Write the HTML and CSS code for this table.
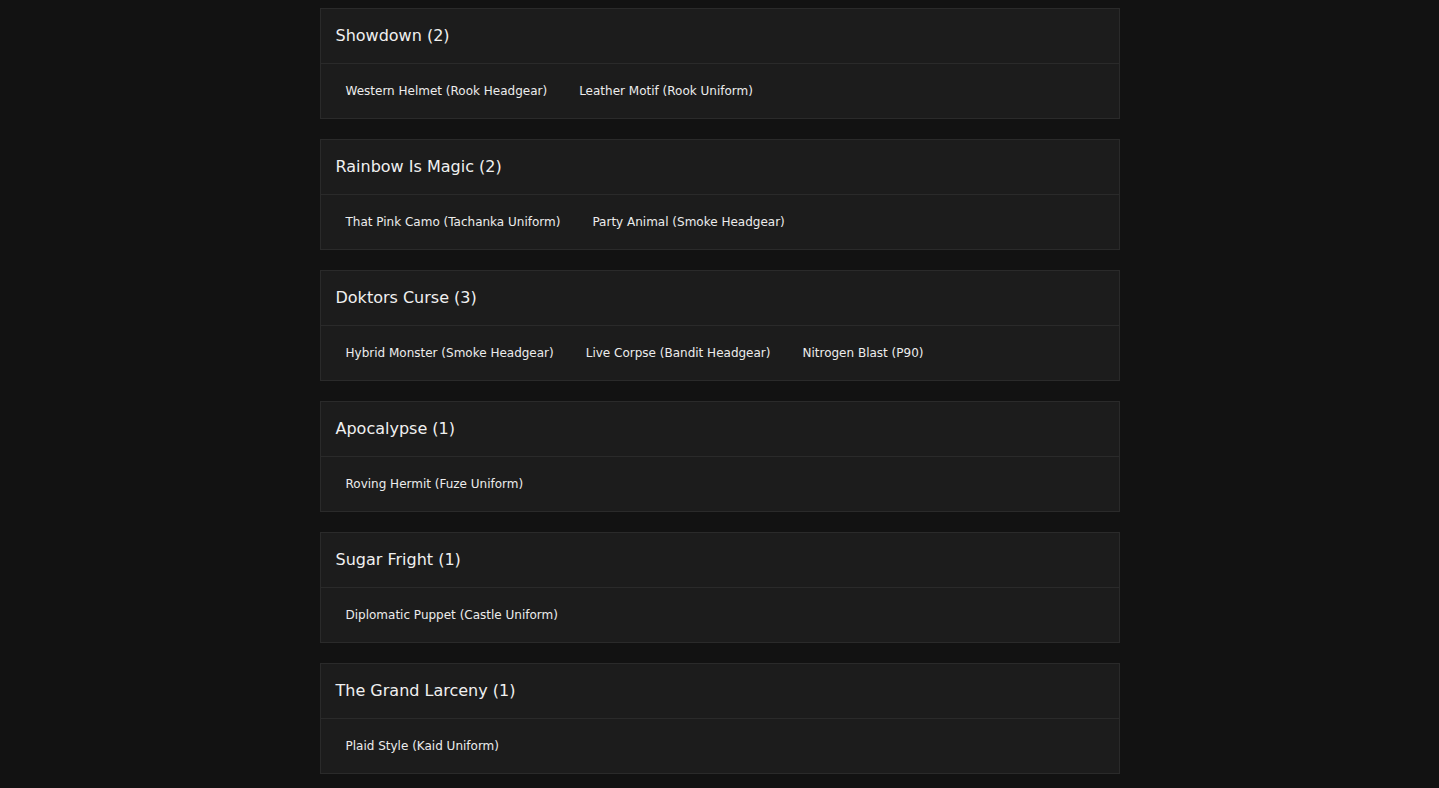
FILE: index.html
```html
<!DOCTYPE html>
<html lang="en">
<head>
    <meta charset="UTF-8">
    <meta name="viewport" content="width=device-width, initial-scale=1.0">
    <title>Events</title>
    <link rel="stylesheet" href="styles.css">
</head>
<body>
    <main class="event-list">
        <section class="event">
            <h2 class="event-title">Showdown (2)</h2>
            <ul class="event-items">
                <li>Western Helmet (Rook Headgear)</li>
                <li>Leather Motif (Rook Uniform)</li>
            </ul>
        </section>
        <section class="event">
            <h2 class="event-title">Rainbow Is Magic (2)</h2>
            <ul class="event-items">
                <li>That Pink Camo (Tachanka Uniform)</li>
                <li>Party Animal (Smoke Headgear)</li>
            </ul>
        </section>
        <section class="event">
            <h2 class="event-title">Doktors Curse (3)</h2>
            <ul class="event-items">
                <li>Hybrid Monster (Smoke Headgear)</li>
                <li>Live Corpse (Bandit Headgear)</li>
                <li>Nitrogen Blast (P90)</li>
            </ul>
        </section>
        <section class="event">
            <h2 class="event-title">Apocalypse (1)</h2>
            <ul class="event-items">
                <li>Roving Hermit (Fuze Uniform)</li>
            </ul>
        </section>
        <section class="event">
            <h2 class="event-title">Sugar Fright (1)</h2>
            <ul class="event-items">
                <li>Diplomatic Puppet (Castle Uniform)</li>
            </ul>
        </section>
        <section class="event">
            <h2 class="event-title">The Grand Larceny (1)</h2>
            <ul class="event-items">
                <li>Plaid Style (Kaid Uniform)</li>
            </ul>
        </section>
    </main>
</body>
</html>
```
FILE: styles.css
```css
body {
    margin: 0;
    padding: 8px 0 0;
    background: #121212;
    color: #e4e4e4;
    font-family: "DejaVu Sans", sans-serif;
}

.event-list {
    width: 800px;
    margin: 0 auto;
    display: flex;
    flex-direction: column;
    gap: 20px;
}

.event {
    background: #1c1c1c;
    border: 1px solid #2a2a2a;
}

.event-title {
    margin: 0;
    height: 55px;
    box-sizing: border-box;
    display: flex;
    align-items: center;
    padding: 0 15px 1px;
    font-size: 16px;
    font-weight: normal;
    color: #f0f0f0;
    border-bottom: 1px solid #2a2a2a;
}

.event-items {
    list-style: none;
    margin: 0;
    height: 54px;
    padding: 0 25px;
    display: flex;
    align-items: center;
    gap: 32px;
    font-size: 12px;
    color: #ececec;
}
```
